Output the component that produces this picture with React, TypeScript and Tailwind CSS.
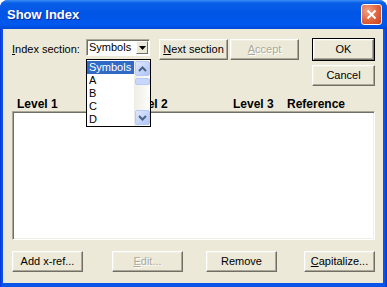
import type { ReactNode } from 'react';

function Btn({
  children,
  className = '',
  disabled = false,
}: {
  children: ReactNode;
  className?: string;
  disabled?: boolean;
}) {
  return (
    <div
      className={`flex h-[21px] items-center justify-center border border-t-white border-l-white border-r-[#716f64] border-b-[#716f64] bg-[#ece9d8] shadow-[inset_-1px_-1px_#aca899,inset_1px_1px_#f1efe2] ${
        disabled ? 'text-[#aca899] [text-shadow:1px_1px_#ffffff]' : 'text-black'
      } ${className}`}
    >
      {children}
    </div>
  );
}

function ScrollArrow({ up }: { up?: boolean }) {
  return (
    <div className="flex h-[15px] w-[15px] items-center justify-center rounded-[2px] border border-[#b7c9f4] bg-[linear-gradient(135deg,#dfe8fd,#c1d3fb_60%,#b2c6f6)]">
      <svg width="9" height="6" viewBox="0 0 9 6">
        <path
          d={up ? 'M1 5 L4.5 1.5 L8 5' : 'M1 1 L4.5 4.5 L8 1'}
          fill="none"
          stroke="#4d6185"
          strokeWidth="2"
        />
      </svg>
    </div>
  );
}

export default function App() {
  const items = ['Symbols', 'A', 'B', 'C', 'D'];

  return (
    <div className="h-[287px] w-[387px] bg-white font-['Liberation_Sans',Arial,sans-serif] text-[11px] leading-[13px] text-black">
      <div className="flex h-full w-full flex-col overflow-hidden rounded-t-[8px] bg-[linear-gradient(to_right,#0831d9,#0a55e8_2px,#0a55e8_calc(100%-2px),#0831d9)]">
        {/* Title bar */}
        <div className="flex h-[29px] shrink-0 items-center bg-[linear-gradient(to_bottom,#3c8ef3_0%,#0a5fe8_10%,#0055e5_45%,#0058ee_85%,#0047d6_100%)] pl-[7px] pr-[5px]">
          <span className="font-['Liberation_Sans',Arial,sans-serif] text-[13px] font-bold leading-none text-white [text-shadow:1px_1px_#0b2a9a]">
            Show Index
          </span>
          <div className="ml-auto flex h-[21px] w-[21px] items-center justify-center rounded-[3px] border border-white bg-[radial-gradient(circle_at_30%_30%,#f0a287,#e0623c_55%,#c8401a)]">
            <svg width="11" height="11" viewBox="0 0 11 11">
              <path d="M1.5 1.5 L9.5 9.5 M9.5 1.5 L1.5 9.5" stroke="#fff" strokeWidth="2" />
            </svg>
          </div>
        </div>

        {/* Body */}
        <div className="mb-[4px] ml-[3px] mr-[4px] flex flex-1 flex-col bg-[#ece9d8] pl-[9px] pr-[8px] pt-[9px]">
          {/* Top row */}
          <div className="flex">
            <div className="mt-[1px] flex items-start">
              <span className="mt-[4px] w-[74px]">
                <u>I</u>ndex section:
              </span>
              <div className="relative">
                <div className="flex h-[17px] w-[64px] border border-t-[#aca899] border-l-[#aca899] border-r-white border-b-white bg-white shadow-[inset_1px_1px_#716f64]">
                  <span className="pl-[2px] pt-[1px]">Symbols</span>
                  <div className="ml-auto mr-[1px] mt-[1px] flex h-[13px] w-[12px] items-center justify-center border border-t-white border-l-white border-r-[#716f64] border-b-[#716f64] bg-[#ece9d8]">
                    <svg width="7" height="4" viewBox="0 0 7 4">
                      <path d="M0 0 H7 L3.5 4 Z" fill="#000" />
                    </svg>
                  </div>
                </div>
                {/* Open dropdown list */}
                <div className="absolute left-0 top-[20px] z-10 flex h-[68px] w-[65px] border border-black bg-white">
                  <div className="flex w-[47px] flex-col pt-[1px]">
                    {items.map((it, i) => (
                      <div
                        key={it}
                        className={`h-[13px] pl-[2px] ${i === 0 ? 'bg-[#316ac5] text-white' : ''}`}
                      >
                        {it}
                      </div>
                    ))}
                  </div>
                  <div className="flex w-[16px] flex-col items-center bg-[linear-gradient(to_right,#eeede5,#fdfdfb)] py-[1px]">
                    <ScrollArrow up />
                    <div className="mt-[2px] h-[7px] w-[15px] rounded-[2px] border border-[#b7c9f4] bg-[#c8d7fc]" />
                    <div className="mt-auto">
                      <ScrollArrow />
                    </div>
                  </div>
                </div>
              </div>
              <Btn className="ml-[9px] w-[69px]">
                <span>
                  <u>N</u>ext section
                </span>
              </Btn>
              <Btn className="ml-[2px] w-[69px]" disabled>
                <span>
                  <u>A</u>ccept
                </span>
              </Btn>
            </div>
            <div className="ml-auto flex w-[63px] flex-col">
              <div className="border border-black">
                <Btn className="w-full">OK</Btn>
              </div>
              <Btn className="mt-[4px] w-full">Cancel</Btn>
            </div>
          </div>

          {/* Column headers */}
          <div className="mt-[12px] flex h-[13px] pl-[5px] text-[12px] font-bold leading-[13px]">
            <span className="w-[110px]">Level 1</span>
            <span className="w-[106px]">Level 2</span>
            <span className="w-[54px]">Level 3</span>
            <span>Reference</span>
          </div>

          {/* List */}
          <div className="h-[129px] border border-t-[#aca899] border-l-[#aca899] border-r-white border-b-white bg-white shadow-[inset_1px_1px_#716f64,inset_-1px_-1px_#f1efe2]" />

          {/* Bottom buttons */}
          <div className="mt-[11px] flex">
            <Btn className="w-[71px]">Add x-ref...</Btn>
            <Btn className="ml-[29px] w-[71px]" disabled>
              <span>
                <u>E</u>dit...
              </span>
            </Btn>
            <Btn className="ml-[23px] w-[71px]">Remove</Btn>
            <Btn className="ml-auto w-[71px]">
              <span>
                <u>C</u>apitalize...
              </span>
            </Btn>
          </div>
        </div>
      </div>
    </div>
  );
}
